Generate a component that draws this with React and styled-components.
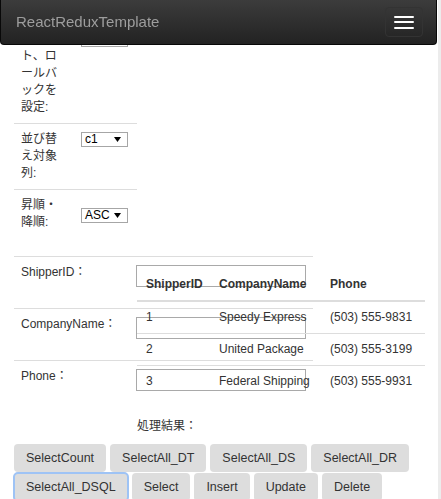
import React from 'react'
import styled, { createGlobalStyle } from 'styled-components'

const GlobalStyle = createGlobalStyle`
  html, body {
    margin: 0;
    padding: 0;
    height: 100%;
    overflow: hidden;
    background: #fff;
  }
  body {
    font-family: "Liberation Sans", "Noto Sans CJK JP", sans-serif;
    font-size: 12px;
    line-height: 17px;
    color: #333;
  }
`

const Shell = styled.div`
  display: flex;
  height: 100vh;
`
const Page = styled.div`
  flex: 1;
  min-width: 0;
`
const ScrollTrack = styled.div`
  width: 4px;
  box-sizing: border-box;
  border-left: 1px solid #fff;
  background: #ececec;
`

const Navbar = styled.nav`
  position: fixed;
  top: 0;
  left: 0;
  right: 4px;
  z-index: 10;
  height: 45px;
  box-sizing: border-box;
  display: flex;
  align-items: center;
  justify-content: space-between;
  padding: 0 13px 0 15px;
  background-image: linear-gradient(to bottom, #3c3c3c 0%, #222 100%);
  border: 1px solid #080808;
  border-top: 0;
  border-radius: 0 0 4px 4px;
`
const Brand = styled.a`
  font-size: 15px;
  line-height: 17px;
  color: #9d9d9d;
  text-decoration: none;
  margin-top: -1px;
`
const Toggle = styled.button`
  width: 38px;
  height: 30px;
  box-sizing: border-box;
  display: flex;
  flex-direction: column;
  align-items: center;
  justify-content: center;
  gap: 3.5px;
  padding: 0;
  background: transparent;
  border: 1px solid #333;
  border-radius: 4px;
`
const Bar = styled.span`
  display: block;
  width: 20px;
  height: 2px;
  background: #fff;
  border-radius: 1px;
`

const Main = styled.main`
  padding: 23px 14px 0;
`

const OptionTable = styled.table`
  width: 123px;
  border-collapse: collapse;
  table-layout: fixed;
`
const OptionLabel = styled.td`
  width: 46px;
  padding: 7px;
  border-top: 1px solid #ddd;
  vertical-align: top;
  line-break: anywhere;
`
const OptionCell = styled.td`
  padding: 7px;
  border-top: 1px solid #ddd;
  vertical-align: top;
`
const FakeSelect = styled.div`
  display: flex;
  align-items: center;
  justify-content: space-between;
  box-sizing: border-box;
  width: 47px;
  height: 15px;
  margin-top: ${p => p.$offset}px;
  padding: 0 6px 0 3px;
  border: 1px solid #a6a6a6;
  font-size: 12px;
  line-height: 13px;
  color: #000;
`

const LowerGrid = styled.div`
  display: grid;
  grid-template-columns: 123px 176px 112px;
  margin-top: 18px;
`
const FormTable = styled.table`
  grid-column: 1 / 3;
  grid-row: 1;
  width: 299px;
  border-collapse: collapse;
  table-layout: fixed;
`
const FormLabel = styled.td`
  width: 101px;
  padding: 7px;
  border-top: 1px solid #ddd;
  vertical-align: top;
`
const FormCell = styled.td`
  padding: 7px;
  border-top: 1px solid #ddd;
  vertical-align: top;
`
const FieldBox = styled.div`
  height: 36px;
`
const TextInput = styled.input`
  display: block;
  box-sizing: border-box;
  width: 170px;
  height: 22px;
  margin: 1px 0 0;
  padding: 1px 3px;
  border: 1px solid #a9a9a9;
  background: transparent;
  font: inherit;
`

const DataTable = styled.table`
  grid-column: 2 / 4;
  grid-row: 1;
  align-self: start;
  margin-top: 13px;
  width: 288px;
  border-collapse: collapse;
  table-layout: fixed;
`
const HeadCell = styled.th`
  width: ${p => p.$w}px;
  box-sizing: border-box;
  padding: 7px 4px 7px 9px;
  text-align: left;
  font-weight: bold;
  white-space: nowrap;
  border-bottom: 2px solid #ddd;
`
const DataCell = styled.td`
  padding: 7px 4px 7px 9px;
  border-top: 1px solid #ddd;
  white-space: nowrap;
`

const ResultLabel = styled.div`
  grid-column: 2 / 4;
  grid-row: 2;
  padding-top: 6px;
`

const ButtonBar = styled.div`
  display: flex;
  flex-wrap: wrap;
  gap: 1px 4px;
  margin-top: 9px;
`
const ActionButton = styled.button`
  height: 28px;
  padding: 0 12px;
  border: 0;
  border-radius: 4px;
  background: #ddd;
  color: #333;
  font-family: "Liberation Sans", sans-serif;
  font-size: 12.5px;
  outline: ${p => (p.$focused ? '2px solid #9ec3f5' : 'none')};
  outline-offset: -1px;
`

const options = [
  { label: 'コミット、ロールバックを設定:', value: '', offset: 1 },
  { label: '並び替え対象列:', value: 'c1', offset: 1 },
  { label: '昇順・降順:', value: 'ASC', offset: 11 },
]

const fields = ['ShipperID：', 'CompanyName：', 'Phone：']

const shippers = [
  { id: 1, name: 'Speedy Express', phone: '(503) 555-9831' },
  { id: 2, name: 'United Package', phone: '(503) 555-3199' },
  { id: 3, name: 'Federal Shipping', phone: '(503) 555-9931' },
]

const actions = [
  'SelectCount', 'SelectAll_DT', 'SelectAll_DS', 'SelectAll_DR',
  'SelectAll_DSQL', 'Select', 'Insert', 'Update', 'Delete',
]

const Arrow = () =>
  <svg width="7" height="5" viewBox="0 0 7 5">
    <polygon points="0,0 7,0 3.5,5" fill="#000" />
  </svg>

const App = () =>
  <Shell>
    <GlobalStyle />
    <Page>
      <Navbar>
        <Brand href="#">ReactReduxTemplate</Brand>
        <Toggle type="button">
          <Bar />
          <Bar />
          <Bar />
        </Toggle>
      </Navbar>

      <Main>
        <OptionTable>
          <tbody>
            {options.map(o =>
              <tr key={o.label}>
                <OptionLabel>{o.label}</OptionLabel>
                <OptionCell>
                  <FakeSelect $offset={o.offset}>
                    <span>{o.value}</span>
                    <Arrow />
                  </FakeSelect>
                </OptionCell>
              </tr>,
            )}
          </tbody>
        </OptionTable>

        <LowerGrid>
          <FormTable>
            <tbody>
              {fields.map(f =>
                <tr key={f}>
                  <FormLabel>{f}</FormLabel>
                  <FormCell>
                    <FieldBox>
                      <TextInput type="text" />
                    </FieldBox>
                  </FormCell>
                </tr>,
              )}
            </tbody>
          </FormTable>

          <DataTable>
            <thead>
              <tr>
                <HeadCell $w={73}>ShipperID</HeadCell>
                <HeadCell $w={111}>CompanyName</HeadCell>
                <HeadCell $w={104}>Phone</HeadCell>
              </tr>
            </thead>
            <tbody>
              {shippers.map(s =>
                <tr key={s.id}>
                  <DataCell>{s.id}</DataCell>
                  <DataCell>{s.name}</DataCell>
                  <DataCell>{s.phone}</DataCell>
                </tr>,
              )}
            </tbody>
          </DataTable>

          <ResultLabel>処理結果：</ResultLabel>
        </LowerGrid>

        <ButtonBar>
          {actions.map(a =>
            <ActionButton key={a} type="button" $focused={a === 'SelectAll_DSQL'}>{a}</ActionButton>,
          )}
        </ButtonBar>
      </Main>
    </Page>
    <ScrollTrack />
  </Shell>

export default App
